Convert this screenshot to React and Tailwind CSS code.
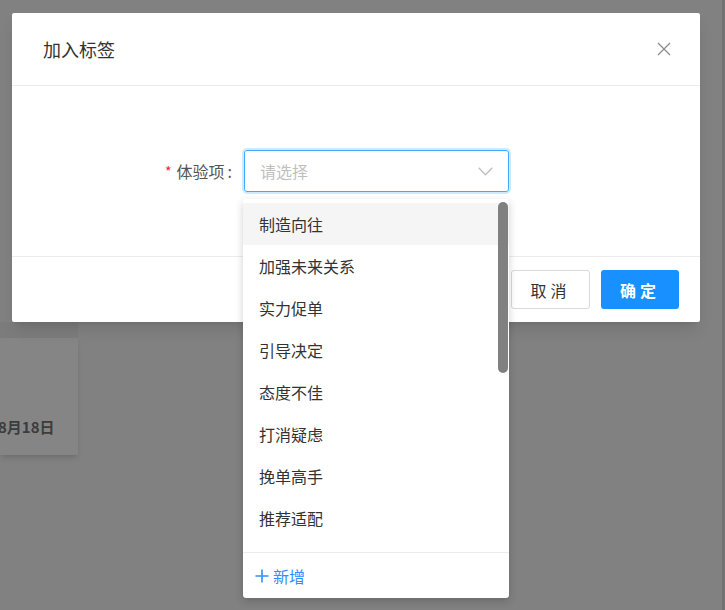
const options = ['制造向往', '加强未来关系', '实力促单', '引导决定', '态度不佳', '打消疑虑', '挽单高手', '推荐适配'];

const App = () => {
  return (
    <div className="relative h-[610px] w-[725px] overflow-hidden bg-[#818181] font-['Noto_Sans_CJK_SC',sans-serif]">
      {/* page under the mask */}
      <div className="pt-[322px]">
        <div className="h-[16px] w-[78px] bg-[#7c7c7c]" />
        <div className="flex h-[117px] w-[78px] items-end bg-[#858585] pb-[18px] shadow-md">
          <span className="-ml-[2px] text-[15px] font-bold leading-[20px] text-[#3c3c3c]">8月18日</span>
        </div>
      </div>
      <div className="absolute right-0 top-0 h-full w-[3px] bg-[#727272]" />

      {/* modal */}
      <div className="absolute left-[12px] top-[13px] w-[688px] rounded-[2px] bg-white shadow-lg">
        <div className="flex h-[73px] items-center justify-between border-b border-[#ececec] pl-[31px] pr-[29px]">
          <span className="text-[18px] leading-[24px] text-[#333]">加入标签</span>
          <svg width="14" height="14" viewBox="0 0 14 14" className="text-[#8c8c8c]">
            <path d="M1 1L13 13M13 1L1 13" stroke="currentColor" strokeWidth="1.3" fill="none" />
          </svg>
        </div>
        <div className="flex h-[170px] items-center pl-[153px]">
          <label className="flex w-[79px] items-center text-[16px] leading-[22px] text-[#555]">
            <span className="mr-[5px] text-[14px] text-[#f5222d]">*</span>
            体验项
            <span className="ml-[3px]">:</span>
          </label>
          <div className="flex h-[42px] w-[265px] items-center justify-between rounded-[3px] border border-[#40a9ff] pl-[15px] pr-[15px] shadow-[0_0_0_2px_rgba(24,144,255,0.2)]">
            <span className="text-[16px] leading-[22px] text-[#bfbfbf]">请选择</span>
            <svg width="15" height="9" viewBox="0 0 15 9" className="text-[#bfbfbf]">
              <path d="M0.7 0.7L7.5 7.8L14.3 0.7" stroke="currentColor" strokeWidth="1.3" fill="none" />
            </svg>
          </div>
        </div>
        <div className="flex h-[66px] items-center justify-end gap-[11px] border-t border-[#ececec] pr-[21px]">
          <button className="h-[39px] w-[79px] rounded-[3px] border border-[#d9d9d9] bg-white text-[16px] tracking-[4px] text-[#333]">
            取消
          </button>
          <button className="h-[39px] w-[78px] rounded-[3px] bg-[#1890ff] text-[16px] font-bold tracking-[4px] text-white">
            确定
          </button>
        </div>
      </div>

      {/* dropdown */}
      <div className="absolute left-[243px] top-[199px] w-[266px] rounded-[3px] bg-white shadow-[0_3px_8px_rgba(0,0,0,0.18)]">
        <div className="relative pb-[13px] pt-[4px]">
          {options.map((option, i) => (
            <div
              key={option}
              className={`flex h-[42px] items-center pl-[16px] text-[16px] leading-[22px] text-[#333] ${
                i === 0 ? 'bg-[#f5f5f5]' : ''
              }`}
            >
              {option}
            </div>
          ))}
          <div className="absolute right-[1px] top-[3px] h-[171px] w-[10px] rounded-full bg-[#808080]" />
        </div>
        <div className="flex h-[46px] items-center gap-[4px] border-t border-[#ececec] pl-[12px] text-[16px] leading-[22px] text-[#2f8fff]">
          <svg width="14" height="14" viewBox="0 0 14 14">
            <path d="M7 0.5V13.5M0.5 7H13.5" stroke="currentColor" strokeWidth="1.6" fill="none" />
          </svg>
          <span>新增</span>
        </div>
      </div>
    </div>
  );
};

export default App;
